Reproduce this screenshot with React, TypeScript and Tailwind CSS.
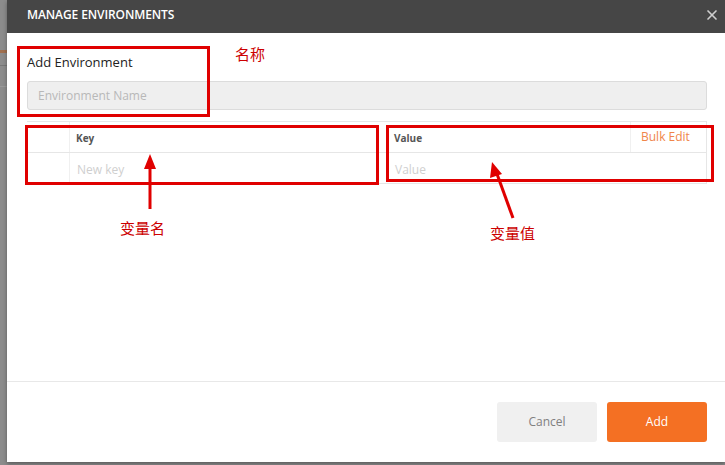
import React from "react";
import { X } from "lucide-react";

export default function App() {
    return (
        <div className="relative w-[725px] h-[465px] overflow-hidden bg-[#8c8c8c] flex font-['Open_Sans',sans-serif]">
            {/* dimmed app behind the modal */}
            <div className="w-[7px] flex flex-col">
                <div className="h-[50px]" />
                <div className="h-[3px] bg-[#a07050]" />
                <div className="h-[12px]" />
                <div className="h-[1px] bg-[#777]" />
                <div className="h-[20px]" />
                <div className="h-[1px] bg-[#999]" />
            </div>

            {/* Modal */}
            <div className="flex-1 h-[462px] bg-white flex flex-col shadow-[0_2px_4px_rgba(0,0,0,0.35)]">
                <div className="h-[33px] bg-[#464646] flex items-center justify-between pl-[20px] pr-[5px] pb-[4px]">
                    <span className="text-white text-[12px] font-semibold tracking-[-0.1px]">MANAGE ENVIRONMENTS</span>
                    <X className="w-[16px] h-[16px] text-[#cfcfcf]" strokeWidth={2.5} />
                </div>

                <div className="flex-1 pl-[20px] pr-[18px] pt-[19px]">
                    <div className="text-[13px] text-[#222] leading-[20px] font-medium">Add Environment</div>
                    <div className="mt-[9px] h-[29px] rounded-[3px] border border-[#dcdcdc] bg-[#efefef] flex items-center pl-[10px] text-[12px] text-[#b8b8b8]">
                        Environment Name
                    </div>

                    {/* key/value table */}
                    <div className="mt-[11px] border-t border-r border-[#e6e6e6] text-[12px]">
                        <div className="flex h-[31px] border-b border-[#e6e6e6]">
                            <div className="w-[43px] border-r border-[#f0f0f0]" />
                            <div className="w-[317px] flex items-center pt-[2px] pl-[6px] text-[10px] font-bold text-[#555]">Key</div>
                            <div className="flex-1 flex items-center pt-[2px] pl-[7px] text-[10px] font-bold text-[#555]">Value</div>
                            <div className="w-[76px] border-l border-[#f0f0f0] flex items-start pt-[6px] pl-[10px] text-[12px] text-[#f0854a]">Bulk Edit</div>
                        </div>
                        <div className="flex h-[31px] border-b border-[#e6e6e6]">
                            <div className="w-[43px] border-r border-[#f0f0f0]" />
                            <div className="w-[317px] flex items-center pt-[3px] pl-[7px] text-[#cfcfcf]">New key</div>
                            <div className="flex-1 flex items-center pt-[3px] pl-[8px] text-[#cfcfcf]">Value</div>
                        </div>
                    </div>
                </div>

                <div className="h-[81px] border-t border-[#e8e8e8] flex items-center justify-end gap-[10px] pr-[18px]">
                    <button className="w-[100px] h-[40px] rounded-[3px] bg-[#f0f0f0] text-[#808080] text-[12px]">Cancel</button>
                    <button className="w-[100px] h-[40px] rounded-[3px] bg-[#f47023] text-white text-[12px]">Add</button>
                </div>
            </div>

            {/* red annotations */}
            <div className="absolute left-[17px] top-[46px] w-[193px] h-[71px] border-[3px] border-[#e00000]" />
            <div className="absolute left-[25px] top-[125px] w-[354px] h-[60px] border-[3px] border-[#e00000]" />
            <div className="absolute left-[386px] top-[125px] w-[328px] h-[57px] border-[3px] border-[#e00000]" />

            <span className="absolute left-[235px] top-[43px] text-[15px] text-[#cc0000] font-['Noto_Sans_CJK_SC',sans-serif]">名称</span>
            <span className="absolute left-[120px] top-[217px] text-[15px] text-[#cc0000] font-['Noto_Sans_CJK_SC',sans-serif]">变量名</span>
            <span className="absolute left-[490px] top-[222px] text-[15px] text-[#cc0000] font-['Noto_Sans_CJK_SC',sans-serif]">变量值</span>

            <svg className="absolute left-0 top-0" width="725" height="465" viewBox="0 0 725 465">
                <line x1="150" y1="209" x2="150" y2="166" stroke="#e00000" strokeWidth="3" />
                <polygon points="150,154 144,169 156,169" fill="#e00000" />
                <line x1="513" y1="218" x2="497" y2="174" stroke="#e00000" strokeWidth="3" />
                <polygon points="492,162 490,178 502,174" fill="#e00000" />
            </svg>
        </div>
    );
}
